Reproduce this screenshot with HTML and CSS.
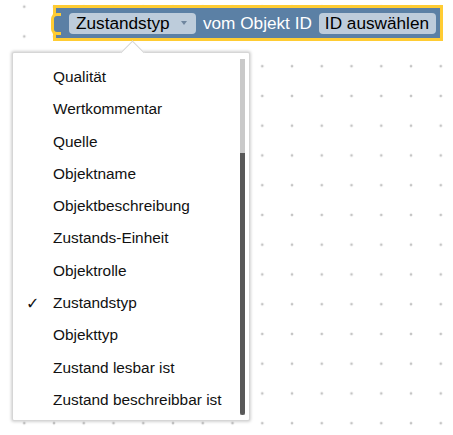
FILE: index.html
```html
<!DOCTYPE html>
<html lang="de">

<head>
    <meta charset="UTF-8">
    <title>Blockly</title>
    <link rel="stylesheet" href="styles.css">
</head>

<body>
    <div class="workspace">
        <div class="block">
            <div class="field field-dropdown">
                <span>Zustandstyp</span>
                <span class="arrow"></span>
            </div>
            <span class="label">vom Objekt ID</span>
            <div class="field">ID auswählen</div>
        </div>

        <div class="dropdown">
            <div class="dropdown-arrow"></div>
            <ul class="menu">
                <li class="item">Qualität</li>
                <li class="item">Wertkommentar</li>
                <li class="item">Quelle</li>
                <li class="item">Objektname</li>
                <li class="item">Objektbeschreibung</li>
                <li class="item">Zustands-Einheit</li>
                <li class="item">Objektrolle</li>
                <li class="item checked">Zustandstyp</li>
                <li class="item">Objekttyp</li>
                <li class="item">Zustand lesbar ist</li>
                <li class="item">Zustand beschreibbar ist</li>
            </ul>
            <div class="scrollbar">
                <div class="thumb"></div>
            </div>
        </div>
    </div>
</body>

</html>
```

FILE: styles.css
```css
* {
    margin: 0;
    padding: 0;
    box-sizing: border-box;
}

body {
    width: 453px;
    height: 435px;
    overflow: hidden;
    background: #fff;
    font-family: "Liberation Sans", Arial, sans-serif;
}

.workspace {
    position: relative;
    width: 100%;
    height: 100%;
    background-image: radial-gradient(circle, #c4c4c4 1.1px, transparent 1.7px);
    background-size: 29.75px 29.75px;
    background-position: 9.4px -8.2px;
}

/* block */

.block {
    position: absolute;
    left: 53px;
    top: 5px;
    width: 390px;
    height: 36px;
    display: flex;
    align-items: center;
    gap: 7px;
    padding: 0 4px 0 13px;
    background: #5b80a5;
    border: 3px solid #fc3;
    font-size: 17.2px;
}

.block::before {
    content: "";
    position: absolute;
    left: -5px;
    top: 5px;
    width: 7px;
    height: 16px;
    background: #5b80a5;
    border: 3px solid #fc3;
    border-right: none;
    border-radius: 6px 0 0 6px;
}

.field {
    display: flex;
    align-items: center;
    height: 21px;
    padding: 0 7px 0 6px;
    border-radius: 4px;
    background: #bdccdb;
    color: #000;
    white-space: nowrap;
}

.field-dropdown {
    width: 127px;
    padding-left: 7px;
}

.arrow {
    margin-left: 11px;
    border-left: 3px solid transparent;
    border-right: 3px solid transparent;
    border-top: 4px solid #6f869f;
}

.label {
    color: #fff;
    white-space: nowrap;
}

/* dropdown */

.dropdown {
    position: absolute;
    left: 12px;
    top: 52px;
    width: 238px;
    height: 369px;
    display: flex;
    background: #fff;
    border: 1px solid #d6d6d6;
    border-radius: 2px;
    box-shadow: 0 0 3px 1px rgba(0, 0, 0, .18);
}

.dropdown-arrow {
    position: absolute;
    left: 111px;
    top: -9px;
    width: 17px;
    height: 17px;
    background: #fff;
    border-top: 1px solid #d6d6d6;
    border-left: 1px solid #d6d6d6;
    transform: rotate(45deg);
}

.menu {
    position: relative;
    flex: 1;
    list-style: none;
    padding-top: 8px;
}

.item {
    position: relative;
    height: 32.3px;
    line-height: 32.3px;
    padding-left: 40px;
    font-size: 15.4px;
    color: #111;
    white-space: nowrap;
}

.checked::before {
    content: "\2713";
    position: absolute;
    left: 13px;
    top: 1px;
    font-family: "DejaVu Sans", sans-serif;
    font-size: 16px;
    font-style: italic;
}

.scrollbar {
    width: 5px;
    margin: 6px 4px 5px 0;
    display: flex;
    flex-direction: column;
    justify-content: flex-end;
    background: #c9c9c9;
}

.thumb {
    height: 262px;
    background: #595959;
    border-radius: 0 0 3px 3px;
}
```
